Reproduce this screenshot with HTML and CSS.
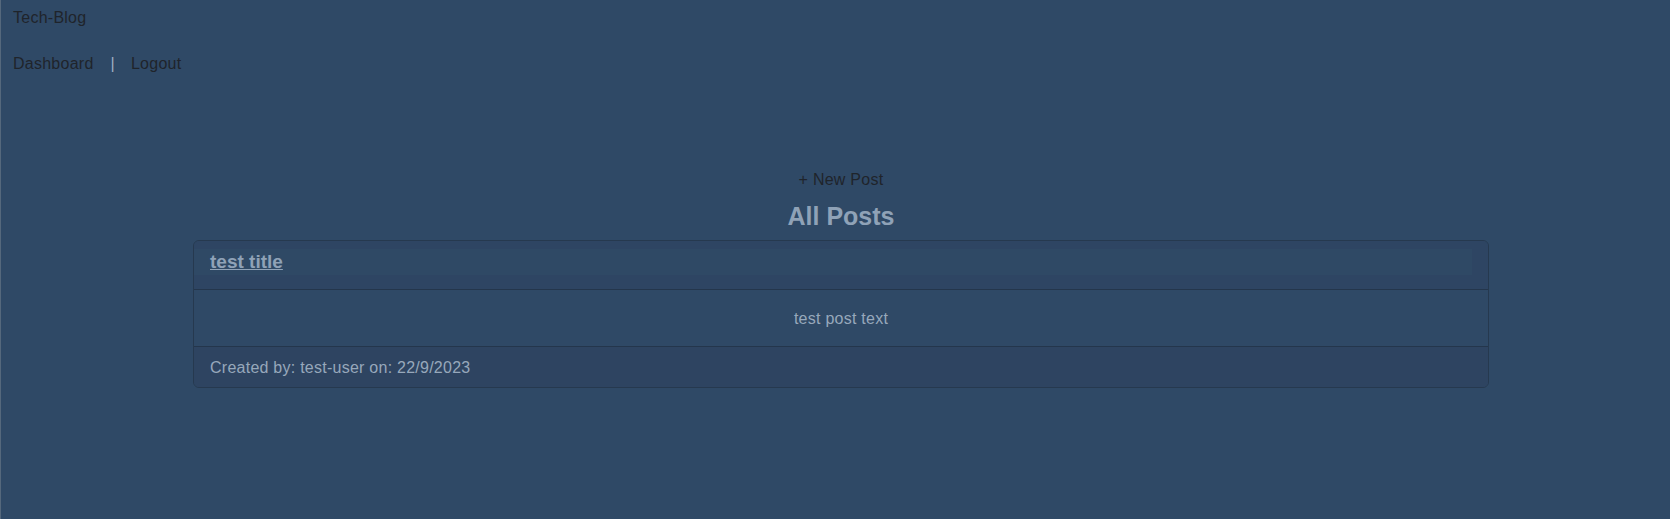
FILE: index.html
```html
<!DOCTYPE html>
<html lang="en">
<head>
<meta charset="utf-8">
<title>Tech-Blog</title>
<link rel="stylesheet" href="styles.css">
</head>
<body>
<header class="nav">
  <div class="brand">Tech-Blog</div>
  <nav class="links">
    <a class="link" href="#">Dashboard</a>
    <span class="sep">|</span>
    <a class="link" href="#">Logout</a>
  </nav>
</header>
<main class="main">
  <section class="container">
    <a class="new-post" href="#">+ New Post</a>
    <h2 class="heading">All Posts</h2>
    <article class="card">
      <div class="card-header">
        <h3 class="card-title"><a href="#">test title</a></h3>
      </div>
      <div class="card-body">test post text</div>
      <div class="card-footer">Created by: test-user on: 22/9/2023</div>
    </article>
  </section>
</main>
</body>
</html>
```
FILE: styles.css
```css
html, body {
  margin: 0;
  padding: 0;
  height: 100%;
}
body {
  background: #2f4966;
  border-left: 1px solid #55687c;
  font-family: "Liberation Sans", Arial, sans-serif;
  font-size: 16px;
  line-height: 24px;
  letter-spacing: 0.25px;
  color: #1f242b;
  box-sizing: border-box;
}
.nav {
  padding: 6px 0 0 12px;
}
.brand {
  height: 24px;
}
.links {
  display: flex;
  align-items: center;
  margin-top: 22px;
}
.link {
  color: #1f242b;
  text-decoration: none;
}
.sep {
  color: #9fb0c2;
  margin: 0 16px 0 17px;
}
.main {
  display: flex;
  justify-content: center;
  padding-left: 11px;
  margin-top: 92px;
}
.container {
  width: 1296px;
  display: flex;
  flex-direction: column;
  align-items: center;
}
.new-post {
  color: #1f242b;
  text-decoration: none;
}
.heading {
  margin: 9px 0 8px;
  font-size: 25px;
  line-height: 31px;
  letter-spacing: 0;
  font-weight: 700;
  color: #8fa2b7;
}
.card {
  align-self: stretch;
  border: 1px solid #26394f;
  border-radius: 6px;
  overflow: hidden;
  color: #97a8bb;
}
.card-header {
  background: #2e4563;
  border-bottom: 1px solid #24364c;
  padding: 8px 16px 14px 0;
}
.card-title {
  margin: 0;
  padding: 0 0 0 16px;
  background: #2f4965;
  font-size: 19px;
  line-height: 26px;
  letter-spacing: 0;
  font-weight: 700;
}
.card-title a {
  color: #8fa2b7;
  text-decoration: underline;
}
.card-body {
  padding: 17px 16px 15px;
  text-align: center;
  line-height: 24px;
}
.card-footer {
  background: #2e4461;
  border-top: 1px solid #24364c;
  padding: 9px 16px 7px;
}
```
